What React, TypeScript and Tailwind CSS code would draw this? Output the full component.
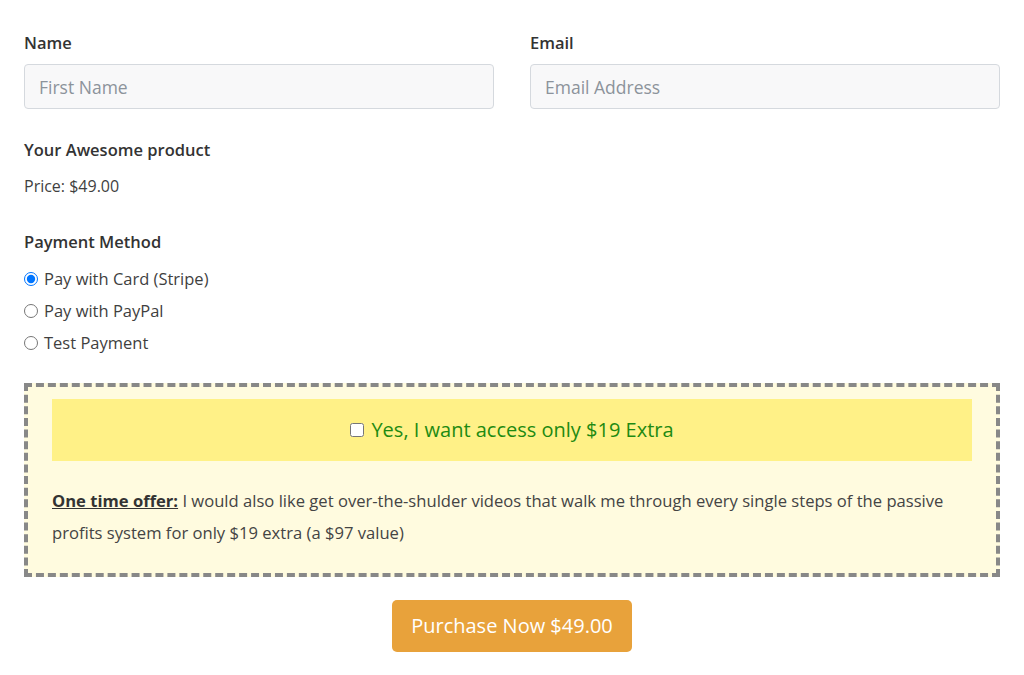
export default function App() {
  return (
    <div className="min-h-screen bg-white px-6 pt-[30px] text-[#3f3f3f]" style={{ fontFamily: "'Open Sans', 'Noto Sans', sans-serif" }}>
      {/* Name / Email */}
      <div className="grid grid-cols-2 gap-9">
        <div>
          <label className="block text-[16.5px] font-semibold text-[#333] leading-[26px] mb-[8px]">Name</label>
          <input
            type="text"
            placeholder="First Name"
            className="block w-full h-[45px] rounded-[4px] border border-[#d5d9de] bg-[#f8f8f9] px-[14px] text-[17.5px] placeholder:text-[#8c939b] outline-none"
          />
        </div>
        <div>
          <label className="block text-[16.5px] font-semibold text-[#333] leading-[26px] mb-[8px]">Email</label>
          <input
            type="text"
            placeholder="Email Address"
            className="block w-full h-[45px] rounded-[4px] border border-[#d5d9de] bg-[#f8f8f9] px-[14px] text-[17.5px] placeholder:text-[#8c939b] outline-none"
          />
        </div>
      </div>

      {/* Product */}
      <p className="mt-[28px] text-[16.5px] font-semibold text-[#333] leading-[26px]">Your Awesome product</p>
      <p className="mt-[10px] text-[16px] leading-[26px]">Price: $49.00</p>

      {/* Payment */}
      <p className="mt-[30px] text-[16.5px] font-semibold text-[#333] leading-[26px]">Payment Method</p>
      <div className="mt-[8px] flex flex-col">
        {["Pay with Card (Stripe)", "Pay with PayPal", "Test Payment"].map((m, i) => (
          <label key={m} className="flex items-center gap-[6px] text-[16.5px] leading-[32px]">
            <input type="radio" name="pay" defaultChecked={i === 0} className="m-0 w-[14px] h-[14px] accent-[#0075ff]" />
            <span>{m}</span>
          </label>
        ))}
      </div>

      {/* Order bump */}
      <div className="mt-[24px] border-[4px] border-dashed border-[#888] bg-[#fffbdf] px-[24px] pt-[12px] pb-[24px]">
        <div className="flex items-center justify-center gap-[7px] h-[62px] bg-[#fff187] text-[20px] text-[#1e8a12]">
          <input type="checkbox" className="m-0 w-[14px] h-[14px]" />
          <span>Yes, I want access only $19 Extra</span>
        </div>
        <p className="mt-[24px] text-[16.6px] leading-[32px] text-[#444]">
          <span className="font-bold underline text-[#333]">One time offer:</span> I would also like get over-the-shulder videos that walk me through every single steps of the passive profits system for only $19 extra (a $97 value)
        </p>
      </div>

      {/* Purchase button */}
      <div className="mt-[23px] flex justify-center">
        <button className="h-[52px] px-[19px] rounded-[5px] bg-[#e8a23b] text-white text-[20px]">Purchase Now $49.00</button>
      </div>
    </div>
  );
}
